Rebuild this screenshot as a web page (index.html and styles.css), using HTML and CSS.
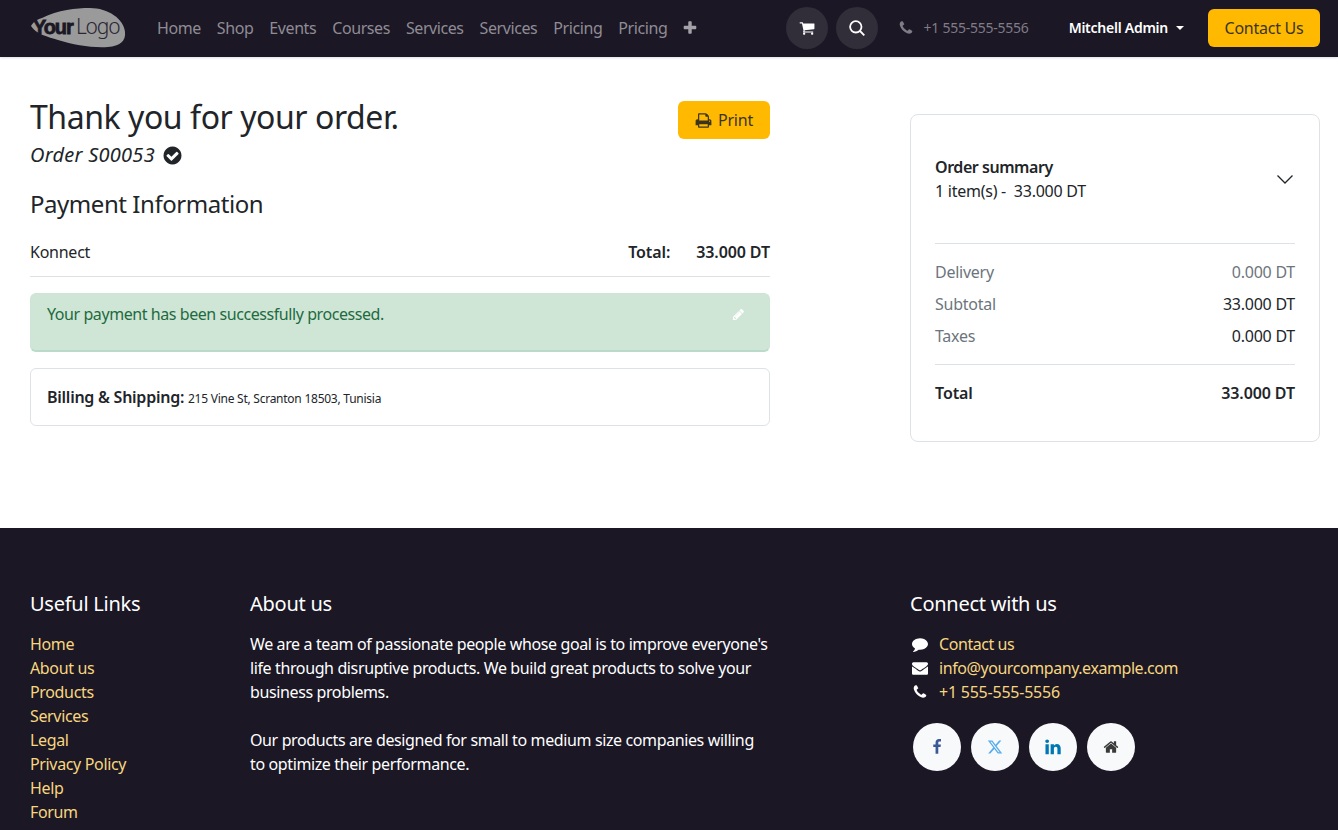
FILE: index.html
```html
<!DOCTYPE html>
<html lang="en">
<head>
<meta charset="UTF-8">
<meta name="viewport" content="width=device-width, initial-scale=1.0">
<title>Payment Confirmation</title>
<link rel="stylesheet" href="styles.css">
</head>
<body>

<header class="navbar">
    <a class="logo" href="#">
        <svg width="96" height="42" viewBox="0 0 96 42">
            <path class="logo-blob" d="M1 19 C4 14 8 12 12 11 C28 3 46 1 60 1 C78 1 94 12 95 25 C96 34 90 39 78 40 C62 41 44 38 28 33 C18 30 6 27 1 19 Z"/>
            <text class="logo-your" x="3" y="27">Your</text>
            <text class="logo-word" x="46" y="27">Logo</text>
        </svg>
    </a>
    <nav class="nav-links">
        <a href="#">Home</a>
        <a href="#">Shop</a>
        <a href="#">Events</a>
        <a href="#">Courses</a>
        <a href="#">Services</a>
        <a href="#">Services</a>
        <a href="#">Pricing</a>
        <a href="#">Pricing</a>
        <a class="nav-plus" href="#">
            <svg width="16" height="16" viewBox="0 0 1792 1792"><path d="M1600 736v192q0 40-28 68t-68 28h-416v416q0 40-28 68t-68 28h-192q-40 0-68-28t-28-68v-416h-416q-40 0-68-28t-28-68v-192q0-40 28-68t68-28h416v-416q0-40 28-68t68-28h192q40 0 68 28t28 68v416h416q40 0 68 28t28 68z"/></svg>
        </a>
    </nav>
    <div class="nav-actions">
        <a class="round-btn" href="#">
            <svg width="16" height="16" viewBox="0 0 1792 1792"><path d="M704 1536q0 52-38 90t-90 38-90-38-38-90 38-90 90-38 90 38 38 90zm896 0q0 52-38 90t-90 38-90-38-38-90 38-90 90-38 90 38 38 90zm128-1088v512q0 24-16.500 42.500t-40.500 21.500l-1044 122q13 60 13 70 0 16-24 64h920q26 0 45 19t19 45-19 45-45 19h-1024q-26 0-45-19t-19-45q0-11 8-31.500t16-36 21.500-40 15.500-29.500l-177-823h-204q-26 0-45-19t-19-45 19-45 45-19h256q16 0 28.500 6.500t19.500 15.500 13 24.500 8 26 5.500 29.500 4.500 26h1201q26 0 45 19t19 45z"/></svg>
        </a>
        <a class="round-btn" href="#">
            <svg class="icon-search" width="16" height="16" viewBox="0 0 16 16"><circle cx="6.800" cy="6.800" r="5.700"/><path d="M11 11 L15.300 15.300"/></svg>
        </a>
        <a class="nav-phone" href="#">
            <svg width="16" height="16" viewBox="0 0 1792 1792"><path d="M1600 1240q0 27-10 70.500t-21 68.500q-21 50-122 106-94 51-186 51-27 0-53-3.500t-57.500-12.500-47-14.500-55.500-20.500-49-18q-98-35-175-83-127-79-264-216t-216-264q-48-77-83-175-3-9-18-49t-20.500-55.500-14.500-47-12.500-57.500-3.500-53q0-92 51-186 56-101 106-122 25-11 68.500-21t70.500-10q14 0 21 3 18 6 53 76 11 19 30 54t35 63.500 31 53.500q3 4 17.500 25t21.500 35.500 7 28.500q0 20-28.500 50t-62 55-62 53-28.500 46q0 9 5 22.500t8.500 20.500 14 24 11.500 19q76 137 174 235t235 174q2 1 19 11.500t24 14 20.500 8.500 22.500 5q18 0 46-28.500t53-62 55-62 50-28.500q14 0 28.500 7t35.500 21.500 25 17.500q25 15 53.500 31t63.500 35 54 30q70 35 76 53 3 7 3 21z"/></svg>
            <span>+1 555-555-5556</span>
        </a>
        <a class="nav-user" href="#">Mitchell Admin<span class="caret"></span></a>
        <a class="btn nav-contact" href="#">Contact Us</a>
    </div>
</header>

<main class="page">
    <section class="order-col">
        <div class="order-top">
            <div>
                <h1>Thank you for your order.</h1>
                <div class="order-ref">
                    <em>Order S00053</em>
                    <svg width="21" height="21" viewBox="0 0 1792 1792"><path d="M1412 734q0-28-18-46l-91-90q-19-19-45-19t-45 19l-408 407-226-226q-19-19-45-19t-45 19l-91 90q-18 18-18 46 0 27 18 45l362 362q19 19 45 19 27 0 46-19l543-543q18-18 18-45zm252 162q0 209-103 385.500t-279.500 279.500-385.500 103-385.500-103-279.500-279.500-103-385.500 103-385.500 279.500-279.500 385.500-103 385.500 103 279.500 279.500 103 385.500z"/></svg>
                </div>
            </div>
            <a class="btn btn-print" href="#">
                <svg width="17" height="17" viewBox="0 0 1792 1792"><path d="M448 1536h896v-256h-896v256zm0-640h896v-384h-160q-40 0-68-28t-28-68v-160h-640v640zm1152 64q0-26-19-45t-45-19-45 19-19 45 19 45 45 19 45-19 19-45zm128 0v416q0 13-9.500 22.500t-22.500 9.500h-224v160q0 40-28 68t-68 28h-960q-40 0-68-28t-28-68v-160h-224q-13 0-22.500-9.500t-9.500-22.500v-416q0-79 56.500-135.500t135.500-56.500h64v-544q0-40 28-68t68-28h672q40 0 88 20t76 48l152 152q28 28 48 76t20 88v256h64q79 0 135.500 56.500t56.500 135.500z"/></svg>
                Print
            </a>
        </div>

        <h2>Payment Information</h2>
        <div class="payment-row">
            <span>Konnect</span>
            <span class="payment-total"><b>Total:</b><b>33.000 DT</b></span>
        </div>

        <div class="alert-success">
            <p>Your payment has been successfully processed.</p>
            <svg class="alert-edit" width="13" height="13" viewBox="0 0 1792 1792"><path d="M491 1536l91-91-235-235-91 91v107h128v128h107zm523-928q0-22-22-22-10 0-17 7l-542 542q-7 7-7 17 0 22 22 22 10 0 17-7l542-542q7-7 7-17zm-54-192l416 416-832 832h-416v-416zm683 96q0 53-37 90l-166 166-416-416 166-165q36-38 90-38 53 0 91 38l235 234q37 39 37 91z"/></svg>
        </div>

        <div class="address-card">
            <b>Billing &amp; Shipping:</b> <small>215 Vine St, Scranton 18503, Tunisia</small>
        </div>
    </section>

    <aside class="summary-card">
        <div class="summary-head">
            <div>
                <b class="summary-title">Order summary</b><br>
                1 item(s) -&nbsp; 33.000 DT
            </div>
            <svg class="summary-chevron" width="18" height="18" viewBox="0 0 18 18"><path d="M1.500 5.500 L9 13 L16.500 5.500" fill="none" stroke="#212529" stroke-width="1.300"/></svg>
        </div>
        <div class="summary-rows">
            <div class="summary-row muted"><span>Delivery</span><span>0.000 DT</span></div>
            <div class="summary-row"><span class="label">Subtotal</span><span>33.000 DT</span></div>
            <div class="summary-row"><span class="label">Taxes</span><span>0.000 DT</span></div>
        </div>
        <div class="summary-row summary-total"><b>Total</b><b>33.000 DT</b></div>
    </aside>
</main>

<footer class="footer">
    <div class="footer-links">
        <h5>Useful Links</h5>
        <ul>
            <li><a href="#">Home</a></li>
            <li><a href="#">About us</a></li>
            <li><a href="#">Products</a></li>
            <li><a href="#">Services</a></li>
            <li><a href="#">Legal</a></li>
            <li><a href="#">Privacy Policy</a></li>
            <li><a href="#">Help</a></li>
            <li><a href="#">Forum</a></li>
        </ul>
    </div>
    <div class="footer-about">
        <h5>About us</h5>
        <p>We are a team of passionate people whose goal is to improve everyone's<br>
        life through disruptive products. We build great products to solve your<br>
        business problems.</p>
        <p>Our products are designed for small to medium size companies willing<br>
        to optimize their performance.</p>
    </div>
    <div class="footer-connect">
        <h5>Connect with us</h5>
        <ul>
            <li>
                <svg width="16" height="16" viewBox="0 0 1792 1792"><path d="M1792 896q0 174-120 321.500t-326 233-450 85.500q-70 0-145-8-198 175-460 242-49 14-114 22-17 2-30.500-9t-17.500-29v-1q-3-4-.5-12t2-10 4.500-9.500l6-9 7-8.500 8-9q7-8 31-34.500t34.500-38 31-39.500 32.500-51 27-59 26-76q-157-89-247.500-220t-90.500-281q0-130 71-248.500t191-204.500 286-136.500 348-50.500q244 0 450 85.500t326 233 120 321.500z"/></svg>
                <a href="#">Contact us</a>
            </li>
            <li>
                <svg width="16" height="16" viewBox="0 0 1792 1792"><path d="M1792 710v794q0 66-47 113t-113 47h-1472q-66 0-113-47t-47-113v-794q44 49 101 87 362 246 497 345 57 42 92.500 65.500t94.500 48 110 24.500h2q51 0 110-24.500t94.500-48 92.500-65.500q170-123 498-345 57-39 100-87zm0-294q0 79-49 151t-122 123q-376 261-468 325-10 7-42.500 30.500t-54 38-52 32.500-57.500 27-50 9h-2q-23 0-50-9t-57.500-27-52-32.500-54-38-42.500-30.500q-91-64-262-182.500t-205-142.500q-62-42-117-115.500t-55-136.500q0-78 41.500-130t118.500-52h1472q65 0 112.500 47t47.500 113z"/></svg>
                <a href="#">info@yourcompany.example.com</a>
            </li>
            <li class="footer-phone">
                <svg width="16" height="16" viewBox="0 0 1792 1792"><path d="M1600 1240q0 27-10 70.500t-21 68.500q-21 50-122 106-94 51-186 51-27 0-53-3.500t-57.500-12.500-47-14.500-55.500-20.500-49-18q-98-35-175-83-127-79-264-216t-216-264q-48-77-83-175-3-9-18-49t-20.500-55.500-14.500-47-12.500-57.500-3.500-53q0-92 51-186 56-101 106-122 25-11 68.500-21t70.500-10q14 0 21 3 18 6 53 76 11 19 30 54t35 63.500 31 53.500q3 4 17.500 25t21.500 35.500 7 28.500q0 20-28.500 50t-62 55-62 53-28.500 46q0 9 5 22.500t8.500 20.500 14 24 11.500 19q76 137 174 235t235 174q2 1 19 11.500t24 14 20.500 8.500 22.500 5q18 0 46-28.500t53-62 55-62 50-28.500q14 0 28.500 7t35.500 21.500 25 17.500q25 15 53.500 31t63.500 35 54 30q70 35 76 53 3 7 3 21z"/></svg>
                <a href="#">+1 555-555-5556</a>
            </li>
        </ul>
        <div class="social">
            <a href="#" class="fb"><svg width="16" height="16" viewBox="0 0 1792 1792"><path d="M1343 12v264h-157q-86 0-116 36t-30 108v189h293l-39 296h-254v759h-306v-759h-255v-296h255v-218q0-186 104-288.500t277-102.500q147 0 228 12z"/></svg></a>
            <a href="#" class="tw"><svg width="16" height="16" viewBox="0 0 24 24"><path d="M18.244 2.250h3.308l-7.227 8.260 8.502 11.240H16.170l-5.214-6.817L4.990 21.750H1.680l7.730-8.835L1.254 2.250H8.080l4.713 6.231zm-1.161 17.520h1.833L7.084 4.126H5.117z"/></svg></a>
            <a href="#" class="li"><svg width="18" height="18" viewBox="0 0 1792 1792"><path d="M477 625v991h-330v-991h330zm21-306q1 73-50.500 122t-135.500 49h-2q-82 0-132-49t-50-122q0-74 51.500-122.500t134.500-48.500 133 48.500 51 122.500zm1166 729v568h-329v-530q0-105-40.500-164.500t-126.500-59.500q-63 0-105.500 34.500t-63.500 85.500q-11 30-11 81v553h-329q2-399 2-647t-1-296l-1-48h329v144h-2q20-32 41-56t56.500-52 87-43.500 114.500-15.500q171 0 275 113.500t104 332.500z"/></svg></a>
            <a href="#" class="hm"><svg width="16" height="16" viewBox="0 0 1792 1792"><path d="M1472 992v480q0 26-19 45t-45 19h-384v-384h-256v384h-384q-26 0-45-19t-19-45v-480q0-1 .5-3t.5-3l575-474 575 474q1 2 1 6zm223-69l-62 74q-8 9-21 11h-3q-13 0-21-7l-692-577-692 577q-12 8-24 7-13-2-21-11l-62-74q-8-10-7-23.500t11-21.500l719-599q32-26 76-26t76 26l244 204v-195q0-14 9-23t23-9h192q14 0 23 9t9 23v408l219 182q10 8 11 21.500t-7 23.500z"/></svg></a>
        </div>
    </div>
</footer>

</body>
</html>
```

FILE: styles.css
```css
body {
    font-family: "Noto Sans", Arial, sans-serif;
    font-size: 16px;
    line-height: 24px;
    letter-spacing: -0.25px;
    margin: 0;
    padding: 0;
    color: #212529;
    background-color: #fff;
}
a {
    color: inherit;
    text-decoration: none;
}
b {
    font-weight: 600;
}
svg {
    fill: currentColor;
    display: block;
    flex: none;
}
.navbar {
    display: flex;
    align-items: center;
    height: 56px;
    padding: 0 18px 1px 30px;
    background-color: #1b1725;
    box-shadow: 0 1px 2px rgba(0, 0, 0, 0.12);
    color: #8f8c94;
}
.logo-blob {
    fill: #9a9a9a;
}
.logo-your {
    font-family: "Liberation Sans", Arial, sans-serif;
    font-size: 20px;
    font-weight: 700;
    letter-spacing: -1.1px;
    fill: #1b1725;
    stroke: #1b1725;
    stroke-width: 0.8px;
}
.logo-word {
    font-family: "Noto Sans", Arial, sans-serif;
    font-size: 21px;
    font-weight: 300;
    letter-spacing: -1.2px;
    fill: #2a2633;
}
.nav-links {
    display: flex;
    align-items: center;
    gap: 16px;
    margin-left: 31px;
    letter-spacing: -0.42px;
}
.nav-plus {
    color: #a4a2a8;
    margin-left: -1px;
}
.nav-actions {
    display: flex;
    align-items: center;
    margin-left: auto;
}
.round-btn {
    display: flex;
    align-items: center;
    justify-content: center;
    width: 42px;
    height: 42px;
    margin-right: 8px;
    border-radius: 50%;
    background-color: #312e3a;
    color: #fff;
}
.icon-search {
    fill: none;
    stroke: #fff;
    stroke-width: 1.8;
}
.nav-phone {
    display: flex;
    align-items: center;
    gap: 10px;
    margin-left: 12px;
    font-size: 14px;
    color: #7f7c85;
}
.nav-user {
    display: flex;
    align-items: center;
    margin-left: 40px;
    font-size: 14px;
    font-weight: 600;
    color: #fff;
}
.caret {
    width: 0;
    height: 0;
    margin-left: 8px;
    border-top: 4px solid #fff;
    border-left: 4px solid transparent;
    border-right: 4px solid transparent;
}
.btn {
    display: flex;
    align-items: center;
    justify-content: center;
    height: 38px;
    border-radius: 6px;
    background-color: #ffb900;
    color: #3b3520;
}
.nav-contact {
    width: 112px;
    margin-left: 24px;
}
.page {
    display: flex;
    justify-content: space-between;
    align-items: flex-start;
    height: 471px;
    padding: 0 18px 0 30px;
}
.order-col {
    width: 740px;
    padding-top: 41px;
}
.order-top {
    display: flex;
    justify-content: space-between;
    align-items: flex-start;
}
h1 {
    margin: 0;
    font-size: 32px;
    font-weight: 400;
    line-height: 38px;
    letter-spacing: -0.44px;
}
.order-ref {
    display: flex;
    align-items: center;
    gap: 7px;
    margin-top: 4px;
    font-size: 20px;
    line-height: 30px;
    letter-spacing: 0.25px;
}
.btn-print {
    gap: 6px;
    width: 92px;
    margin-top: 3px;
}
h2 {
    margin: 19px 0 0;
    font-size: 24px;
    font-weight: 400;
    line-height: 30px;
    letter-spacing: -0.45px;
}
.payment-row {
    display: flex;
    justify-content: space-between;
    align-items: center;
    height: 48px;
    margin-top: 9px;
    border-bottom: 1px solid #dee2e6;
}
.payment-total {
    display: flex;
    gap: 26px;
    letter-spacing: -0.1px;
}
.alert-success {
    display: flex;
    justify-content: space-between;
    margin-top: 16px;
    padding: 8px 24px 8px 16px;
    height: 40px;
    border: 1px solid #cde5d6;
    border-bottom: 2px solid #badbcc;
    border-radius: 6px;
    background-color: #cfe6d6;
    color: #226a3e;
    letter-spacing: -0.43px;
}
.alert-success p {
    margin: 0;
}
.alert-edit {
    margin-top: 6px;
    color: #fff;
}
.address-card {
    margin-top: 16px;
    padding: 16px;
    border: 1px solid #dee2e6;
    border-radius: 6px;
}
.address-card small {
    font-size: 12px;
    line-height: 1;
}
.summary-card {
    width: 360px;
    height: 326px;
    margin-top: 57px;
    padding: 0 24px;
    border: 1px solid #dee2e6;
    border-radius: 8px;
}
.summary-head {
    display: flex;
    justify-content: space-between;
    align-items: center;
    padding: 40px 0;
    border-bottom: 1px solid #dee2e6;
}
.summary-title {
    letter-spacing: -0.45px;
}
.summary-chevron {
    margin-right: 1px;
}
.summary-rows {
    padding: 12px 0;
    border-bottom: 1px solid #dee2e6;
}
.summary-row {
    display: flex;
    justify-content: space-between;
    align-items: center;
    height: 32px;
}
.muted, .label {
    color: #6c757d;
}
.summary-total {
    margin-top: 12px;
    letter-spacing: -0.1px;
}
.footer {
    display: grid;
    grid-template-columns: 220px 660px 1fr;
    height: 238px;
    padding: 64px 18px 0 30px;
    overflow: hidden;
    background-color: #1b1725;
    color: #fff;
}
h5 {
    margin: 0 0 16px;
    font-size: 20px;
    font-weight: 400;
    line-height: 24px;
    letter-spacing: -0.25px;
}
.footer ul {
    list-style: none;
    margin: 0;
    padding: 0;
}
.footer li a {
    color: #f7d67f;
}
.footer-links ul {
    letter-spacing: -0.35px;
}
.footer-about {
    width: 530px;
}
.footer-about p {
    margin: 0 0 24px;
    letter-spacing: -0.38px;
}
.footer-connect ul {
    letter-spacing: -0.43px;
}
.footer-connect .footer-phone {
    letter-spacing: -0.23px;
}
.footer-connect li {
    display: flex;
    align-items: center;
    gap: 11px;
    padding-left: 2px;
}
.social {
    display: flex;
    gap: 10px;
    margin: 19px 0 0 3px;
}
.social a {
    display: flex;
    align-items: center;
    justify-content: center;
    width: 48px;
    height: 48px;
    border-radius: 50%;
    background-color: #f8f9fa;
}
.fb {
    color: #3b5998;
}
.tw {
    color: #55acee;
}
.li {
    color: #0077b5;
}
.hm {
    color: #3a3a3a;
}
```
